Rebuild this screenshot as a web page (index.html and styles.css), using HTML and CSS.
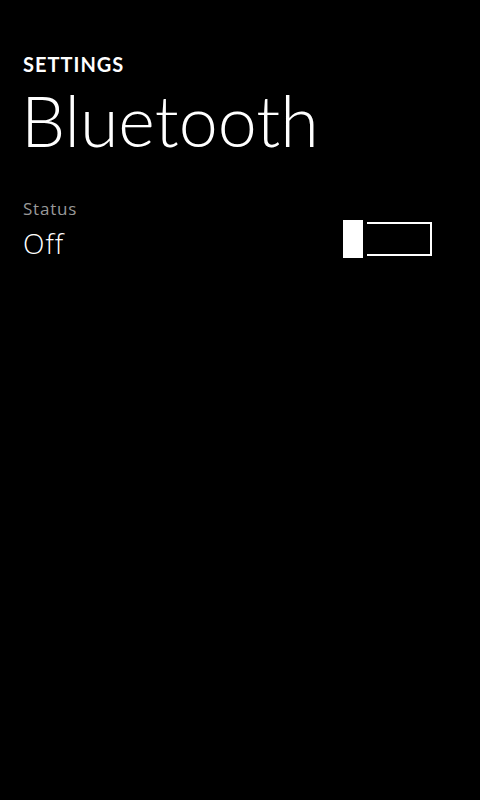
FILE: index.html
```html
<!DOCTYPE html>
<html>
<head>
<meta charset="utf-8">
<link rel="stylesheet" href="styles.css">
</head>
<body>
<div class="page">
  <div class="app-title">SETTINGS</div>
  <div class="page-title">Bluetooth</div>
  <div class="setting-row">
    <div class="setting-text">
      <div class="label">Status</div>
      <div class="value">Off</div>
    </div>
    <div class="toggle">
      <div class="thumb"></div>
      <div class="track"></div>
    </div>
  </div>
</div>
</body>
</html>
```

FILE: styles.css
```css
html, body {
  margin: 0;
  padding: 0;
  background: #000;
  height: 100%;
}
.page {
  padding: 52px 48px 0 23px;
  font-family: "Open Sans", "Noto Sans", sans-serif;
  color: #fff;
}
.app-title {
  font-family: "Lato", "Open Sans", sans-serif;
  font-size: 20px;
  line-height: 24px;
  font-weight: 700;
  letter-spacing: 1px;
}
.page-title {
  margin-top: 4px;
  margin-left: -2px;
  font-family: "Lato", "Open Sans", sans-serif;
  font-size: 70px;
  line-height: 80px;
  font-weight: 300;
}
.setting-row {
  margin-top: 39px;
  display: flex;
  justify-content: space-between;
  align-items: flex-start;
}
.label {
  font-size: 17px;
  line-height: 20px;
  letter-spacing: 0.8px;
  color: #999;
}
.value {
  margin-top: 8px;
  font-size: 28px;
  line-height: 32px;
  font-weight: 300;
  letter-spacing: 1px;
}
.toggle {
  margin-top: 21px;
  display: flex;
  align-items: center;
}
.thumb {
  width: 20px;
  height: 38px;
  background: #fff;
}
.track {
  margin-left: 4px;
  width: 63px;
  height: 30px;
  border: 2px solid #fff;
  border-left: none;
}
```
